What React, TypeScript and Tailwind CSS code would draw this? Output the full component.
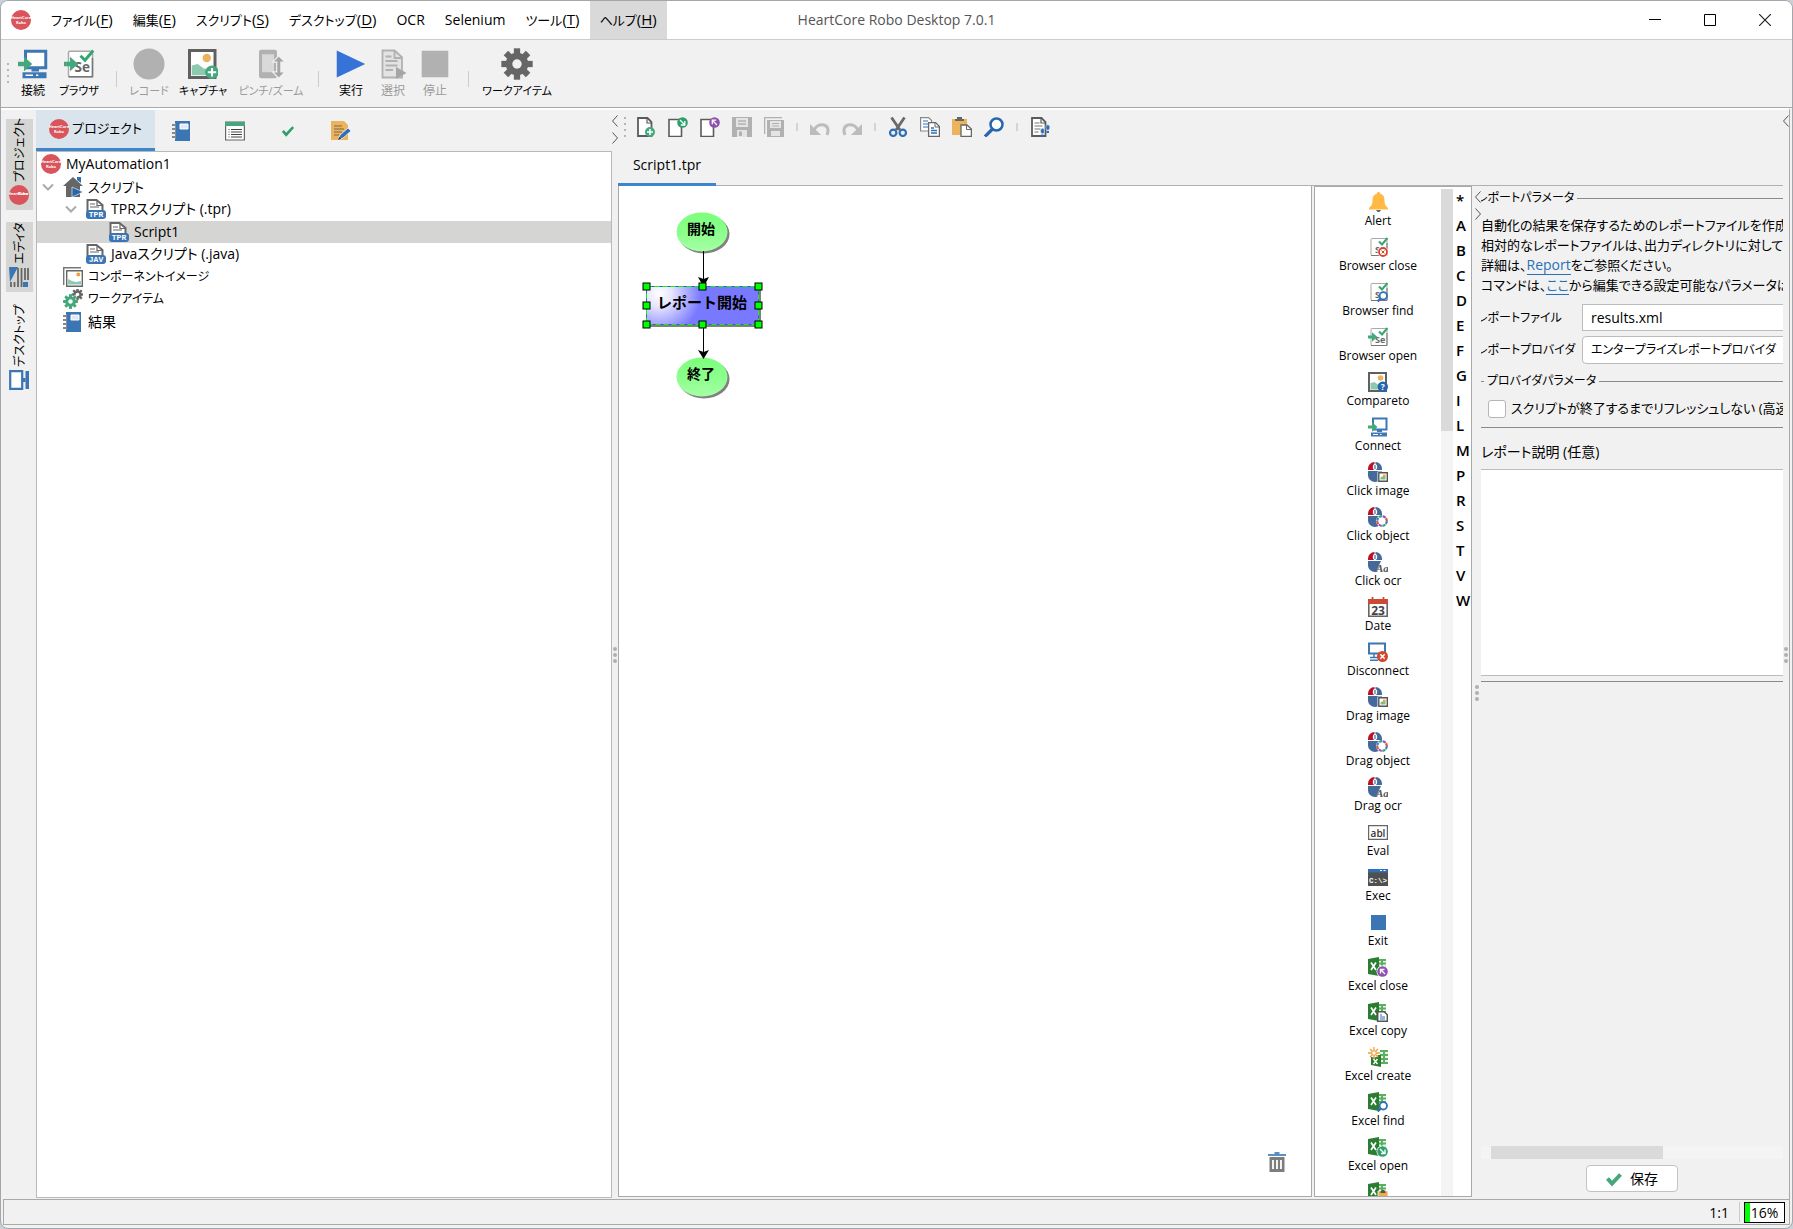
import { useState, type ReactNode } from "react";

/* ---------- shared glyphs ---------- */

function Icon({ children, className = "size-5", box = 20 }: { children: ReactNode; className?: string; box?: number }) {
  return (
    <svg viewBox={`0 0 ${box} ${box}`} className={`shrink-0 ${className}`} fill="none" aria-hidden="true">
      {children}
    </svg>
  );
}

function Logo({ className = "size-5" }: { className?: string }) {
  return (
    <Icon className={className}>
      <circle cx="10" cy="10" r="10" fill="#d9545b" />
      <text x="10" y="9" fontSize="4" fontWeight="700" textAnchor="middle" fill="#fff">HeartCore</text>
      <text x="10" y="14" fontSize="4" fontWeight="700" textAnchor="middle" fill="#fff">Robo</text>
    </Icon>
  );
}

const monitor = (
  <>
    <path d="M5 1.5h13.5v11H5z" fill="#fff" stroke="#3d78b4" strokeWidth="2" />
    <path d="M9 13h5v2H9z" fill="#3d78b4" />
    <path d="M3 15.5h16v4H3z" fill="#3d78b4" />
    <path d="M5 17h5v1H5zM12 17h1.5v1H12z" fill="#fff" />
  </>
);

const greenArrow = <path d="M0 8.5h4V5.2L9.5 10 4 14.8v-3.3H0z" fill="#45a77c" />;

const seleniumBox = (
  <>
    <rect x="3" y="1.5" width="16" height="17" rx="1" fill="#fff" stroke="#a9a9a9" />
    <path d="M3 18.5h16V6" stroke="#777" />
    <text x="7" y="15.5" fontSize="9" fontWeight="700" fill="#666">Se</text>
    <path d="M11 4.5l3 3L19.5 1" stroke="#35a66f" strokeWidth="2" />
  </>
);

const badgeX = (
  <>
    <circle cx="14.5" cy="14.5" r="5.5" fill="#d4462f" />
    <path d="M12.3 12.3l4.4 4.4M16.7 12.3l-4.4 4.4" stroke="#fff" strokeWidth="1.5" />
  </>
);

const badgeFind = (
  <>
    <circle cx="15.3" cy="13.8" r="3.7" fill="#fff" stroke="#2f6fb5" strokeWidth="1.8" />
    <path d="M12.6 16.6L9.6 19.4" stroke="#2f6fb5" strokeWidth="2.4" />
  </>
);

const notebook = (
  <>
    <path d="M3 0h15v20H3z" fill="#3b75b3" />
    <path d="M8 3h8v5H8z" fill="#dfeaf5" stroke="#fff" />
    <path d="M0 4h4M0 8h4M0 12h4M0 16h4" stroke="#f1f1f1" strokeWidth="2.6" />
    <path d="M0 4h4M0 8h4M0 12h4M0 16h4" stroke="#666" strokeWidth="1.4" />
  </>
);

const mouse = (
  <>
    <path d="M6.5 0A6.5 6.5 0 0 0 0 6.5V8h6.5z" fill="#bd1024" />
    <path d="M7.5 0A6.5 6.5 0 0 1 14 6.5V8H7.5z" fill="#44699b" />
    <path d="M0 9h14v4.5a7 6.5 0 0 1-14 0z" fill="#44699b" />
    <ellipse cx="7" cy="5" rx="2.2" ry="3" fill="#fff" />
    <path d="M7 3v4" stroke="#44699b" strokeWidth="1.2" />
  </>
);

const mouseImage = (
  <>
    {mouse}
    <path d="M9.5 9.5H20V20H9.5z" fill="#fff" />
    <path d="M10.8 10.8h8.5v8.5h-8.5z" fill="#fff" stroke="#555" strokeWidth="1.4" />
    <path d="M12.5 17.5v-2l2-1 3-1v4z" fill="#7dbb84" />
    <path d="M15 12.5h2.5v2.5H15z" fill="#f1a43a" />
  </>
);

// Two dashes of each colour make up the eight-part ring
const RING = [
  { color: "#4a7fc1", offset: 0 },
  { color: "#3aa377", offset: -3.8 },
  { color: "#8c55b5", offset: -7.6 },
  { color: "#d75b46", offset: -11.4 },
];

const mouseObject = (
  <>
    {mouse}
    <circle cx="14" cy="14" r="6" fill="#fff" />
    {RING.map(({ color, offset }) => (
      <circle key={color} cx="14" cy="14" r="4.8" stroke={color} strokeWidth="2.2" strokeDasharray="3.2 11.9" strokeDashoffset={offset} />
    ))}
  </>
);

const mouseOcr = (
  <>
    {mouse}
    <path d="M8 20l5-11h7v11z" fill="#fff" />
    <text x="8" y="19.5" fontSize="11" fontStyle="italic" fontWeight="700" fill="#555" className="font-['Liberation_Serif']">Aa</text>
  </>
);

const excel = (
  <>
    <path d="M10 2h8v15h-8z" fill="#eaf5ea" />
    <path d="M10 3h8M10 6.5h8M10 10h8M14 2v14" stroke="#5cae60" strokeWidth="2" />
    <path d="M0 2l11-2v19L0 17z" fill="#2b7d32" />
    <path d="M3 5.5l5 7.5M8 5.5L3 13" stroke="#fff" strokeWidth="1.7" />
  </>
);

const picture = (
  <>
    <path d="M1 1h17v18H1z" fill="#fff" stroke="#606060" strokeWidth="2" />
    <circle cx="12.5" cy="6" r="2.8" fill="#ecb35d" />
    <path d="M2.5 17.5V11l4-1 4 3 4 .5v4z" fill="#8ccab0" />
  </>
);

const doc = <path d="M2 1h9.5l4 4v14H2z" fill="#fff" stroke="#5b5b5b" strokeWidth="1.8" />;
const docFold = <path d="M11 1v5h5" stroke="#5b5b5b" strokeWidth="1.2" />;

function ScriptFile({ tag }: { tag: string }) {
  return (
    <Icon>
      <path d="M1.5 12V1h9l6 5v6" fill="#fff" stroke="#666" strokeWidth="2" />
      <path d="M11 1v5.5h6M4 5h5M4 8h9" stroke="#666" strokeWidth="1.2" />
      <rect x="0" y="11" width="20" height="9" rx="3" fill="#3b75b3" />
      <text x="10" y="18.4" fontSize="8" fontWeight="700" textAnchor="middle" fill="#fff" className="font-['Liberation_Mono']">{tag}</text>
    </Icon>
  );
}

// A toothed wheel built from radial bars around a ring
function Cog({ cx, cy, r, color, hole }: { cx: number; cy: number; r: number; color: string; hole: string }) {
  return (
    <>
      {[0, 45, 90, 135].map((a) => (
        <rect key={a} x={cx - r * 0.2} y={cy - r} width={r * 0.4} height={r * 2} fill={color} transform={`rotate(${a} ${cx} ${cy})`} />
      ))}
      <circle cx={cx} cy={cy} r={r * 0.72} fill={color} />
      <circle cx={cx} cy={cy} r={r * 0.3} fill={hole} />
    </>
  );
}

/* ---------- menu and main toolbar ---------- */

const MENUS: { label: string; key?: string; open?: boolean }[] = [
  { label: "ファイル", key: "F" },
  { label: "編集", key: "E" },
  { label: "スクリプト", key: "S" },
  { label: "デスクトップ", key: "D" },
  { label: "OCR" },
  { label: "Selenium" },
  { label: "ツール", key: "T" },
  { label: "ヘルプ", key: "H", open: true },
];

function TitleBar() {
  return (
    <header className="relative flex h-[39px] shrink-0 items-center border-b border-[#cccccc] bg-white">
      <div className="flex w-[40px] justify-center">
        <Logo />
      </div>
      <nav className="flex h-full">
        {MENUS.map(({ label, key, open }) => (
          <button
            key={label}
            type="button"
            className={`px-[10px] pb-[2px] whitespace-nowrap ${key ? "text-[13px]" : "text-[14px]"} ${open ? "bg-[#d9d9d9]" : ""}`}
          >
            {label}
            {key && (
              <span className="text-[15px]">
                (<u className="underline-offset-2">{key}</u>)
              </span>
            )}
          </button>
        ))}
      </nav>
      <h1 className="pointer-events-none absolute inset-x-0 pb-[2px] text-center text-[14px] text-[#555]">HeartCore Robo Desktop 7.0.1</h1>
      <div className="ml-auto flex h-full">
        <button type="button" aria-label="Minimize" className="flex w-[55px] items-center justify-center">
          <Icon className="size-3" box={12}><path d="M0 5.5h12" stroke="#000" /></Icon>
        </button>
        <button type="button" aria-label="Maximize" className="flex w-[55px] items-center justify-center">
          <Icon className="size-3" box={12}><path d="M.5.5h11v11H.5z" stroke="#000" /></Icon>
        </button>
        <button type="button" aria-label="Close" className="flex w-[55px] items-center justify-center">
          <Icon className="size-3" box={12}><path d="M0 0l12 12M12 0L0 12" stroke="#222" strokeWidth="1.2" /></Icon>
        </button>
      </div>
    </header>
  );
}

interface ToolButtonProps {
  label: string;
  width: string;
  kana?: boolean;
  disabled?: boolean;
  children: ReactNode;
}

function ToolButton({ label, width, kana, disabled, children }: ToolButtonProps) {
  return (
    <button type="button" disabled={disabled} className={`flex shrink-0 flex-col items-center gap-[3px] ${width} ${disabled ? "text-[#9b9b9b]" : "text-black"}`}>
      <span className="flex h-8 items-center">{children}</span>
      <span className={`leading-[16px] whitespace-nowrap ${kana ? "text-[11px]" : "text-[12px]"}`}>{label}</span>
    </button>
  );
}

const ToolSep = () => <span className="mt-3 h-4 w-6 shrink-0 bg-[linear-gradient(#ccc,#ccc)] bg-[length:1px_100%] bg-center bg-no-repeat" />;

function MainToolbar() {
  return (
    <div className="flex h-[68px] shrink-0 items-center border-b border-[#a9a9a9] bg-[#f1f1f1] pb-px pl-[3px]">
      <Grip />
      <ToolButton label="接続" width="w-[42px]">
        <Icon className="size-[30px]">{monitor}{greenArrow}</Icon>
      </ToolButton>
      <ToolButton label="ブラウザ" width="w-[50px]" kana>
        <Icon className="size-[30px]">{seleniumBox}{greenArrow}</Icon>
      </ToolButton>
      <ToolSep />
      <ToolButton label="レコード" width="w-[42px]" kana disabled>
        <Icon className="size-8"><circle cx="10" cy="10" r="9.7" fill="#b1b1b1" /></Icon>
      </ToolButton>
      <ToolButton label="キャプチャ" width="w-[66px]" kana>
        <Icon className="size-[30px]">
          {picture}
          <circle cx="16" cy="15.5" r="4.5" fill="#45a77c" />
          <path d="M16 12.7v5.6M13.2 15.5h5.6" stroke="#fff" strokeWidth="1.4" />
        </Icon>
      </ToolButton>
      <ToolButton label="ピンチ/ズーム" width="w-[70px]" kana disabled>
        <Icon className="size-[30px]">
          <rect x="2" y=".5" width="12" height="19" rx="1.5" fill="#b1b1b1" />
          <path d="M4 3.5h8v12H4z" fill="#d8d8d8" />
          <path d="M15.2 4.5l4.2 4.2h-2.8v6.6h2.8l-4.2 4.2-4.2-4.2h2.8V8.7H11z" fill="#a5a5a5" stroke="#f1f1f1" strokeWidth=".8" />
        </Icon>
      </ToolButton>
      <ToolSep />
      <ToolButton label="実行" width="w-[42px]">
        <Icon className="size-[30px]"><path d="M.5 1l19 9-19 9z" fill="#3672d8" /></Icon>
      </ToolButton>
      <ToolButton label="選択" width="w-[42px]" disabled>
        <Icon className="size-[30px]">
          <path d="M3 1h8l5 4.5V19H3z" fill="#e3e3e3" stroke="#b1b1b1" strokeWidth="1.2" />
          <path d="M11 1v5h5M5 5h4M5 8h8M5 11h8M5 14h5" stroke="#b1b1b1" strokeWidth="1.2" />
          <path d="M12 12l7 4-7 4z" fill="#a5a5a5" />
        </Icon>
      </ToolButton>
      <ToolButton label="停止" width="w-[42px]" disabled>
        <Icon className="size-[28px]"><path d="M.5.5h19v19H.5z" fill="#b1b1b1" /></Icon>
      </ToolButton>
      <ToolSep />
      <ToolButton label="ワークアイテム" width="w-[74px]" kana>
        <Icon className="size-8"><Cog cx={10} cy={10} r={9.8} color="#666" hole="#f1f1f1" /></Icon>
      </ToolButton>
    </div>
  );
}

function Grip() {
  return (
    <span className="flex w-[8px] shrink-0 flex-col items-center gap-1">
      {[0, 1, 2, 3].map((i) => (
        <span key={i} className="size-[2px] bg-[#b5b5b5]" />
      ))}
    </span>
  );
}

/* ---------- left side ---------- */

const desktopGlyph = (
  <>
    <path d="M1.2 1.2h17.6v12H1.2z" fill="#fff" stroke="#3b75b3" strokeWidth="2.2" />
    <path d="M8 13.5h4v3H8z" fill="#3b75b3" />
    <path d="M1 16.5h18V20H1z" fill="#3b75b3" />
  </>
);

const editorGlyph = (
  <>
    <path d="M0 2h5M0 5.5h5M0 9h19M0 12.5h19M7 16h12M7 19h12" stroke="#666" strokeWidth="1.8" />
    <path d="M0 14h5v5H0z" fill="#3b75b3" />
    <path d="M5 1L20 0v9z" fill="#3b75b3" />
  </>
);

function SideRail() {
  const tab =
    "flex w-[27px] rotate-180 items-center justify-start gap-[3px] pt-[5px] text-[12px] leading-[27px] whitespace-nowrap [writing-mode:vertical-rl] [text-orientation:sideways]";
  return (
    <aside className="flex w-[35px] shrink-0 flex-col items-start gap-3 pt-[9px] pl-[5px]">
      <button type="button" className={`${tab} h-[91px] bg-[#d5d5d3]`}>
        <Logo className="size-5 rotate-90" />
        プロジェクト
      </button>
      <button type="button" className={`${tab} h-[70px] bg-[#d5d5d3]`}>
        <Icon className="size-5 rotate-90">{editorGlyph}</Icon>
        エディタ
      </button>
      <button type="button" className={`${tab} h-[91px]`}>
        <Icon className="size-5 rotate-90">{desktopGlyph}</Icon>
        デスクトップ
      </button>
    </aside>
  );
}

const TREE: { label: string; pad: string; size?: string; arrow?: boolean; selected?: boolean; icon: ReactNode }[] = [
  { label: "MyAutomation1", pad: "pl-[4px]", icon: <Logo /> },
  {
    label: "スクリプト", pad: "pl-[5px]", size: "text-[13px]", arrow: true,
    icon: (
      <Icon>
        <path d="M10 0l10 9h-3v11H3V9H0z" fill="#666" />
        <path d="M14 0h4v6l-4-3z" fill="#2f6fb5" />
        <path d="M9 10l11 5-11 5z" fill="#2566ae" stroke="#fff" strokeWidth=".6" />
      </Icon>
    ),
  },
  { label: "TPRスクリプト (.tpr)", pad: "pl-[28px]", arrow: true, icon: <ScriptFile tag="TPR" /> },
  { label: "Script1", pad: "pl-[72px]", selected: true, icon: <ScriptFile tag="TPR" /> },
  { label: "Javaスクリプト (.java)", pad: "pl-[49px]", icon: <ScriptFile tag="JAV" /> },
  {
    label: "コンポーネントイメージ", pad: "pl-[26px]", size: "text-[12px]",
    icon: (
      <Icon>
        <path d="M.7 18V.7H18" stroke="#777" strokeWidth="1.4" />
        <path d="M3.7 3.7h15.6v15.6H3.7z" fill="#fff" stroke="#666" strokeWidth="1.4" />
        <circle cx="15.3" cy="7.5" r="2" fill="#eda33d" />
        <path d="M5 17.5V12l4 2 4 1 5-1v3.5z" fill="#8ccab0" />
      </Icon>
    ),
  },
  {
    label: "ワークアイテム", pad: "pl-[26px]", size: "text-[12px]",
    icon: (
      <Icon>
        <Cog cx={14.5} cy={5.5} r={6} color="#666" hole="#fff" />
        <Cog cx={7.5} cy={12.5} r={8} color="#fff" hole="#fff" />
        <Cog cx={7.5} cy={12.5} r={7.4} color="#45a77c" hole="#fff" />
      </Icon>
    ),
  },
  { label: "結果", pad: "pl-[26px]", icon: <Icon>{notebook}</Icon> },
];

function ProjectPanel() {
  return (
    <section className="flex w-[576px] shrink-0 flex-col">
      <div className="flex h-[41px] shrink-0">
        <button type="button" className="flex w-[119px] items-center justify-center gap-[3px] border-b-[3px] border-[#3d85cc] bg-[#dae4ed] text-[13px] whitespace-nowrap">
          <Logo />
          プロジェクト
        </button>
        <button type="button" aria-label="結果" className="flex w-[53px] items-center justify-center"><Icon>{notebook}</Icon></button>
        <button type="button" aria-label="一覧" className="flex w-[53px] items-center justify-center">
          <Icon>
            <path d="M.6 1h18.8v18H.6z" fill="#fff" stroke="#666" strokeWidth="1.2" />
            <path d="M0 1h20v4H0z" fill="#45a77c" />
            <path d="M3.5 8.5h1M6 8.5h11M3.5 11h1M6 11h11M3.5 13.5h1M6 13.5h11M3.5 16h1M6 16h11" stroke="#444" />
          </Icon>
        </button>
        <button type="button" aria-label="確認" className="flex w-[53px] items-center justify-center">
          <Icon className="size-3" box={12}><path d="M.8 6l3.4 3.7L11.2 2" stroke="#2f9e6c" strokeWidth="2.6" /></Icon>
        </button>
        <button type="button" aria-label="編集" className="flex w-[53px] items-center justify-center">
          <Icon>
            <path d="M0 0h13l4 4v15H0z" fill="#ecb35d" />
            <path d="M3 5h8M3 8h10M3 11h8M3 14h5" stroke="#7b6a4c" strokeWidth="1.2" />
            <path d="M7 19l2-5 8-7 3 3-8 7z" fill="#2f6fb5" stroke="#fff" strokeWidth=".7" />
            <path d="M7 19l1.2-3 2 1.8z" fill="#333" />
          </Icon>
        </button>
      </div>
      <div className="mb-px flex-1 border border-[#b9b9b9] bg-white pt-px">
        <ul className="grid h-[180px] auto-rows-fr">
          {TREE.map(({ label, pad, size = "text-[14px]", arrow, selected, icon }) => (
            <li key={label} className={`flex items-center gap-[5px] leading-[20px] whitespace-nowrap ${size} ${pad} ${selected ? "bg-[#d5d5d3]" : ""}`}>
              {arrow && (
                <Icon className="mr-1 size-3" box={12}><path d="M1 3.5l5 5 5-5" stroke="#aaa" strokeWidth="2" /></Icon>
              )}
              {icon}
              {label}
            </li>
          ))}
        </ul>
      </div>
    </section>
  );
}

// Vertical divider with collapse arrows at its head and three dots half way
function Splitter({ width, arrows = 2 }: { width: string; arrows?: number }) {
  return (
    <div className={`relative flex shrink-0 flex-col items-center justify-center ${width}`}>
      <span className="absolute top-[5px] right-0 flex flex-col gap-[5px]">
        <svg viewBox="0 0 6 12" className="h-3 w-[6px]" fill="none"><path d="M5.5.5L.5 6l5 5.5" stroke="#555" /></svg>
        {arrows === 2 && <svg viewBox="0 0 6 12" className="h-3 w-[6px]" fill="none"><path d="M.5.5l5 5.5-5 5.5" stroke="#555" /></svg>}
      </span>
      <span className="flex flex-col gap-[2px]">
        <span className="size-1 rounded-full bg-[#b0b0b0]" />
        <span className="size-1 rounded-full bg-[#b0b0b0]" />
        <span className="size-1 rounded-full bg-[#b0b0b0]" />
      </span>
    </div>
  );
}

/* ---------- editor ---------- */

const blankPage = <path d="M1 2.5h12.5v17H1z" fill="#fff" stroke="#5b5b5b" strokeWidth="1.6" />;

const EDITOR_TOOLS: { name: string; disabled?: boolean; icon: ReactNode }[][] = [
  [
    {
      name: "New",
      icon: (
        <>
          {doc}{docFold}
          <circle cx="14" cy="15" r="5" fill="#45a77c" />
          <path d="M14 12v6M11 15h6" stroke="#fff" strokeWidth="1.6" />
        </>
      ),
    },
    {
      name: "Open",
      icon: (
        <>
          {blankPage}
          <circle cx="14.5" cy="5.5" r="5.3" fill="#2f9e6c" />
          <path d="M12 3l4.5 4.5M16.8 4v4h-4" stroke="#fff" strokeWidth="1.3" />
        </>
      ),
    },
    {
      name: "Close",
      icon: (
        <>
          {blankPage}
          <circle cx="14.5" cy="5.5" r="5.3" fill="#8e4fae" />
          <path d="M17 8l-4.5-4.5M12.3 7.2v-4h4" stroke="#fff" strokeWidth="1.3" />
        </>
      ),
    },
    {
      name: "Save", disabled: true,
      icon: (
        <>
          <path d="M0 0h20v20H0z" fill="#b1b1b1" />
          <path d="M4 1h12v9H4zM5 13h10v7H5z" fill="#e4e4e4" />
          <path d="M6 4h8M6 7h8" stroke="#b1b1b1" strokeWidth="1.4" />
          <path d="M7 14.5h3V19H7z" fill="#b1b1b1" />
        </>
      ),
    },
    {
      name: "Save all", disabled: true,
      icon: (
        <>
          <path d="M.6 17V.6H18" stroke="#b1b1b1" strokeWidth="1.4" />
          <path d="M3 3h17v17H3z" fill="#b1b1b1" />
          <path d="M6 4h11v7H6zM7 14h9v5H7z" fill="#e4e4e4" />
          <path d="M8 6.5h7M8 9h7" stroke="#b1b1b1" strokeWidth="1.2" />
        </>
      ),
    },
  ],
  [
    {
      name: "Undo", disabled: true,
      icon: (
        <>
          <path d="M0 7v11h11z" fill="#bcbcbc" />
          <path d="M4 13c2-4 6-6 10-5s5 5 3 10" stroke="#bcbcbc" strokeWidth="3" />
        </>
      ),
    },
    {
      name: "Redo", disabled: true,
      icon: (
        <>
          <path d="M20 7v11H9z" fill="#bcbcbc" />
          <path d="M16 13c-2-4-6-6-10-5s-5 5-3 10" stroke="#bcbcbc" strokeWidth="3" />
        </>
      ),
    },
  ],
  [
    {
      name: "Cut",
      icon: (
        <>
          <path d="M3.5.5L12 13M16.5.5L8 13" stroke="#6a6a6a" strokeWidth="2.8" />
          <circle cx="5.2" cy="15.8" r="3.2" fill="#f1f1f1" stroke="#2f6fb5" strokeWidth="2.2" />
          <circle cx="14.8" cy="15.8" r="3.2" fill="#f1f1f1" stroke="#2f6fb5" strokeWidth="2.2" />
        </>
      ),
    },
    {
      name: "Copy",
      icon: (
        <>
          <path d="M.6.6h8l3 3V14H.6z" fill="#fff" stroke="#888" strokeWidth="1.2" />
          <path d="M3 4h5M3 7h5M3 10h5" stroke="#2f6fb5" strokeWidth="1.2" />
          <path d="M8.6 5.6h7l3.8 4v9.8H8.6z" fill="#fff" stroke="#666" strokeWidth="1.3" />
          <path d="M15 5.6V10h4.4" stroke="#666" />
          <path d="M11 11h3M11 13.5h6M11 16h6" stroke="#2f6fb5" strokeWidth="1.3" />
        </>
      ),
    },
    {
      name: "Paste",
      icon: (
        <>
          <path d="M0 2h15v16H0z" fill="#ecb35d" />
          <path d="M5 0h5v2h2v2H3V2h2z" fill="#666" />
          <path d="M9 8h6l4.4 4v7.4H9z" fill="#fff" stroke="#666" strokeWidth="1.3" />
          <path d="M14.5 8v4.5h5" stroke="#666" />
        </>
      ),
    },
    {
      name: "Find",
      icon: (
        <>
          <circle cx="12.5" cy="7.5" r="6" fill="#fff" stroke="#2566ae" strokeWidth="2.5" />
          <path d="M8.5 12L1 19.5" stroke="#2566ae" strokeWidth="3.2" />
        </>
      ),
    },
  ],
  [
    {
      name: "Validate",
      icon: (
        <>
          {doc}{docFold}
          <path d="M4.5 6h5M4.5 9h8M4.5 12h6M4.5 15h4" stroke="#777" strokeWidth="1.2" />
          <ellipse cx="12.5" cy="14" rx="2" ry="2.8" fill="#2f6fb5" stroke="#f1f1f1" strokeWidth=".5" />
          <ellipse cx="17.8" cy="10.5" rx="2" ry="2.8" fill="#2f6fb5" stroke="#f1f1f1" strokeWidth=".5" />
          <path d="M11 18.3h2.5M16.5 15h2.5" stroke="#2f6fb5" strokeWidth="1.8" />
        </>
      ),
    },
  ],
];

function Handle({ x, y }: { x: number; y: number }) {
  return <rect x={x - 3.5} y={y - 3.5} width="7" height="7" fill="#00ff00" stroke="#000" />;
}

function FlowNode({ y, label }: { y: number; label: string }) {
  return (
    <>
      <ellipse cx="85" cy={y + 2} rx="25.5" ry="19.5" fill="#808080" />
      <ellipse cx="83" cy={y} rx="25.5" ry="19.5" fill="url(#leaf)" />
      <text x="82" y={y + 2} textAnchor="middle" fontSize="14" fontWeight="700">{label}</text>
    </>
  );
}

function FlowChart() {
  return (
    <svg width="160" height="230" viewBox="0 0 160 230" className="absolute top-0 left-0 font-['Noto_Sans_CJK_JP'] [font-feature-settings:normal]">
      <defs>
        <linearGradient id="leaf" x1="0" y1="0" x2="0" y2="1">
          <stop offset="0" stopColor="#7bff7b" />
          <stop offset="0.6" stopColor="#8fff8f" />
          <stop offset="1" stopColor="#a6ffa6" />
        </linearGradient>
        <radialGradient id="shine" gradientUnits="userSpaceOnUse" cx="40" cy="108" r="42">
          <stop offset="0" stopColor="#fff" />
          <stop offset="0.3" stopColor="#e6e6ff" />
          <stop offset="1" stopColor="#7979ff" />
        </radialGradient>
      </defs>
      <FlowNode y={46} label="開始" />
      <FlowNode y={191} label="終了" />
      <path d="M84.5 65v30M84.5 141v28" stroke="#000" />
      <path d="M79 91l5.5 2 5.5-2-5.5 10zM79 164l5.5 2 5.5-2-5.5 9z" fill="#000" />
      <path d="M30 103h112v38H30z" fill="#808080" />
      <path d="M27 100h113v38H27z" fill="url(#shine)" />
      <path d="M27.5 100.5h112v38h-112z" stroke="#4a4ad8" fill="none" />
      <path d="M27.5 100.5h112v38h-112z" stroke="#00ff00" strokeDasharray="5 3" fill="none" />
      <text x="83" y="122" textAnchor="middle" fontSize="15" fontWeight="700">レポート開始</text>
      {[100.5, 119.5, 138.5].map((y) => (
        <g key={y}>
          <Handle x={27.5} y={y} />
          {y !== 119.5 && <Handle x={83.5} y={y} />}
          <Handle x={139.5} y={y} />
        </g>
      ))}
    </svg>
  );
}

const excelBadge = (color: string, d: string) => (
  <>
    {excel}
    <circle cx="14.5" cy="14.5" r="6" fill="#fff" />
    <circle cx="14.5" cy="14.5" r="5.3" fill={color} />
    <path d={d} stroke="#fff" strokeWidth="1.4" />
  </>
);

const COMMANDS: { label: string; icon: ReactNode }[] = [
  {
    label: "Alert",
    icon: (
      <>
        <path d="M10.5 0c1 0 1.5.7 1.5 1.5 3 .8 4.500 3.300 4.500 6.500 0 5 1.500 6 3.500 8v1.500H1V16c2-2 3.500-3 3.500-8C4.500 4.800 6 2.300 9 1.500 9 .7 9.500 0 10.500 0z" fill="#ffb944" />
        <path d="M8 18h5l-1.5 2h-2z" fill="#666" />
      </>
    ),
  },
  {
    label: "Browser close",
    icon: (
      <>
        {seleniumBox}
        <circle cx="15" cy="15" r="5.4" fill="#fff" />
        <circle cx="15" cy="15" r="4" stroke="#d4462f" strokeWidth="1.8" />
        <path d="M13.5 13.5l3 3M16.5 13.5l-3 3" stroke="#d4462f" />
      </>
    ),
  },
  { label: "Browser find", icon: <>{seleniumBox}{badgeFind}</> },
  { label: "Browser open", icon: <>{seleniumBox}{greenArrow}</> },
  {
    label: "Compareto",
    icon: (
      <>
        {picture}
        <circle cx="14.8" cy="14.8" r="5.2" fill="#2566ae" />
        <text x="14.8" y="18" fontSize="8.5" fontWeight="700" textAnchor="middle" fill="#fff">?</text>
      </>
    ),
  },
  { label: "Connect", icon: <>{monitor}{greenArrow}</> },
  { label: "Click image", icon: mouseImage },
  { label: "Click object", icon: mouseObject },
  { label: "Click ocr", icon: mouseOcr },
  {
    label: "Date",
    icon: (
      <>
        <path d="M.8 3h18.4v16.2H.8z" fill="#fff" stroke="#666" strokeWidth="1.6" />
        <path d="M0 2h20v5H0z" fill="#cc4a33" />
        <path d="M4.5 0v4M15.5 0v4" stroke="#cc4a33" strokeWidth="1.8" />
        <text x="10" y="17.5" fontSize="12" fontWeight="700" textAnchor="middle" fill="#444">23</text>
      </>
    ),
  },
  {
    label: "Disconnect",
    icon: (
      <>
        <path d="M1 1.5h16v10H1z" fill="#fff" stroke="#3d78b4" strokeWidth="2" />
        <path d="M6 12v3.5M2 15.5h8M2 18.3h8" stroke="#3d78b4" strokeWidth="1.5" />
        {badgeX}
      </>
    ),
  },
  { label: "Drag image", icon: mouseImage },
  { label: "Drag object", icon: mouseObject },
  { label: "Drag ocr", icon: mouseOcr },
  {
    label: "Eval",
    icon: (
      <>
        <path d="M.6 3.6h18.8v13.8H.6z" fill="#fff" stroke="#666" strokeWidth="1.2" />
        <text x="10" y="14.5" fontSize="10" fontWeight="600" textAnchor="middle" fill="#333">abl</text>
      </>
    ),
  },
  {
    label: "Exec",
    icon: (
      <>
        <path d="M0 2h20v17H0z" fill="#505050" />
        <path d="M0 2h20v3.5H0z" fill="#2f6fb5" />
        <path d="M12 3.5h2M15.5 3.5h2" stroke="#fff" />
        <text x="10" y="16" fontSize="7.5" fontWeight="700" textAnchor="middle" fill="#fff" className="font-['Liberation_Mono']">C:\&gt;</text>
      </>
    ),
  },
  { label: "Exit", icon: <path d="M3 3h15v15H3z" fill="#3b75b3" /> },
  { label: "Excel close", icon: excelBadge("#8e4fae", "M17 17l-4-4M12.5 16.5v-4h4") },
  {
    label: "Excel copy",
    icon: (
      <>
        {excel}
        <path d="M9.7 9.7h6.5l3.1 3.1v6.5H9.7z" fill="#fff" stroke="#555" strokeWidth="1.5" />
        <path d="M12 13h2M12 15h5M12 17h5" stroke="#2f6fb5" />
      </>
    ),
  },
  {
    label: "Excel create",
    icon: (
      <>
        <path d="M12 3h8v14h-8z" fill="#eaf5ea" />
        <path d="M12 4h8M12 8h8M12 12h8M12 16h8M16 3v14" stroke="#5cae60" strokeWidth="2" />
        <path d="M3 8h10v12L3 18z" fill="#2b7d32" />
        <path d="M5.5 12l4 5M9.5 12l-4 5" stroke="#fff" strokeWidth="1.4" />
        <circle cx="6" cy="6" r="4.5" fill="#fff" />
        <path d="M6 0v12M0 6h12M2 2l8 8M10 2l-8 8" stroke="#eda33d" strokeWidth="1.3" />
        <circle cx="6" cy="6" r="2.2" fill="#fff" stroke="#eda33d" />
      </>
    ),
  },
  { label: "Excel find", icon: <>{excel}{badgeFind}</> },
  { label: "Excel open", icon: excelBadge("#2f9e6c", "M12 12l4.5 4.5M17 12.5v4h-4") },
  {
    label: "",
    icon: (
      <>
        {excel}
        <path d="M10 9h10v11H10z" fill="#ecae47" stroke="#fff" strokeWidth=".8" />
        <path d="M12.5 11V9.500L14 8h2l1.5 1.5V11z" fill="#555" />
      </>
    ),
  },
];

const LETTERS = ["*", "A", "B", "C", "D", "E", "F", "G", "I", "L", "M", "P", "R", "S", "T", "V", "W"];

function CommandPalette() {
  return (
    <div className="mb-[2px] ml-[2px] flex w-[158px] shrink-0 overflow-hidden border border-[#a9a9a9] bg-white">
      <ul className="min-h-0 w-[126px] shrink-0 pt-[5px]">
        {COMMANDS.map(({ label, icon }, i) => (
          <li key={i} className="flex h-[45px] flex-col items-center text-[12px] leading-[18px] whitespace-nowrap">
            <Icon>{icon}</Icon>
            {label}
          </li>
        ))}
      </ul>
      <div className="mt-[2px] w-3 shrink-0 bg-[#f4f4f4]">
        <div className="h-[24%] bg-[#dadada]" />
      </div>
      <ul className="pt-px pl-[3px] text-[15px] leading-[25px] font-semibold">
        {LETTERS.map((l) => (
          <li key={l}>{l}</li>
        ))}
      </ul>
    </div>
  );
}

/* ---------- report parameters ---------- */

function ReportPanel() {
  const [file, setFile] = useState("results.xml");
  const [noRefresh, setNoRefresh] = useState(false);
  const [note, setNote] = useState("");

  return (
    <section className="flex w-[302px] shrink-0 flex-col overflow-hidden text-[13px] whitespace-nowrap">
      <div className="-ml-1 flex h-[24px] shrink-0 items-center gap-[3px]">
        <h2 className="text-[12px]">レポートパラメータ</h2>
        <span className="h-px flex-1 bg-[#8a8a8a]" />
      </div>
      <p className="pt-[5px] leading-[20px]">
        自動化の結果を保存するためのレポートファイルを作成します。
        <br />
        相対的なレポートファイルは、出力ディレクトリに対して
        <br />
        詳細は、<a href="#report" className="border-b border-[#2a70b8] text-[14px] text-[#2a70b8]">Report</a>をご参照ください。
        <br />
        コマンドは、<a href="#edit" className="border-b border-[#2a70b8] text-[#2a70b8]">ここ</a>から編集できる設定可能なパラメータは
      </p>
      <div className="mt-[9px] flex h-[27px] shrink-0 items-center">
        <label htmlFor="report-file" className="-ml-1 w-[105px] shrink-0 text-[12px]">レポートファイル</label>
        <input
          id="report-file"
          value={file}
          onChange={(e) => setFile(e.target.value)}
          className="h-full w-[260px] shrink-0 border border-[#bcbcbc] bg-white px-2 text-[14px]"
        />
      </div>
      <div className="mt-[5px] flex h-[28px] shrink-0 items-center">
        <label htmlFor="report-provider" className="-ml-1 w-[105px] shrink-0 text-[12px]">レポートプロバイダ</label>
        <select id="report-provider" className="h-full w-[260px] shrink-0 appearance-none rounded border border-[#bcbcbc] bg-white px-2 text-[12px]">
          <option>エンタープライズレポートプロバイダ</option>
        </select>
      </div>
      <fieldset className="mt-[7px] shrink-0 border-b border-[#8a8a8a]">
        <legend className="flex h-[20px] w-full items-center gap-[3px] text-[12px]">
          <span className="h-px w-[3px] bg-[#8a8a8a]" />
          プロバイダパラメータ
          <span className="h-px flex-1 bg-[#8a8a8a]" />
        </legend>
        <label className="flex h-[36px] items-center gap-[5px] pl-[7px]">
          <input
            type="checkbox"
            checked={noRefresh}
            onChange={(e) => setNoRefresh(e.target.checked)}
            className="size-[18px] shrink-0 appearance-none rounded-[3px] border border-[#b5b5b5] bg-white checked:bg-[#3d85cc]"
          />
          スクリプトが終了するまでリフレッシュしない (高速)
        </label>
      </fieldset>
      <label htmlFor="report-note" className="flex h-[41px] shrink-0 items-center pt-[5px] text-[14px]">レポート説明 (任意)</label>
      <textarea
        id="report-note"
        value={note}
        onChange={(e) => setNote(e.target.value)}
        className="h-[207px] w-full shrink-0 resize-none border-y border-[#bcbcbc] bg-white"
      />
      <hr className="mt-[5px] border-[#8a8a8a]" />
      <div className="mt-auto h-[13px] shrink-0 bg-[#f4f4f4] pl-[10px]">
        <div className="h-full w-[172px] bg-[#dadada]" />
      </div>
      <button type="button" className="mt-[6px] mb-[7px] flex h-[27px] w-[92px] shrink-0 items-center justify-center gap-2 self-center rounded border border-[#c2c2c2] bg-white text-[14px]">
        <Icon className="size-4" box={16}><path d="M1.5 7.5l4.5 5 8.5-9" stroke="#45a77c" strokeWidth="4" /></Icon>
        保存
      </button>
    </section>
  );
}

function Editor() {
  return (
    <main className="flex min-w-0 flex-1 flex-col">
      <div className="flex h-[34px] shrink-0 items-center pl-[3px]">
        <Grip />
        <div className="flex pl-px">
          {EDITOR_TOOLS.map((group, i) => (
            <div key={i} className="flex items-center">
              {i > 0 && <span className="mx-[6px] h-2 w-[2px] bg-[#d4d4d4]" />}
              {group.map(({ name, disabled, icon }) => (
                <button key={name} type="button" aria-label={name} disabled={disabled} className="flex w-8 justify-center">
                  <Icon>{icon}</Icon>
                </button>
              ))}
            </div>
          ))}
        </div>
      </div>
      <div className="mr-[6px] flex h-[42px] shrink-0 border-b border-[#b0b0b0]">
        <button type="button" className="h-[42px] w-[98px] border-b-[3px] border-[#3d85cc] pt-px text-[14px]">Script1.tpr</button>
      </div>
      <div className="flex min-h-0 flex-1">
        <div className="relative mb-[2px] min-w-0 flex-1 border border-t-0 border-[#a9a9a9] bg-white">
          <FlowChart />
          <button type="button" aria-label="Delete" className="absolute right-6 bottom-6">
            <Icon>
              <path d="M7.5 0h5v2h-5zM1 2h18v2H1z" fill="#5b8fc4" />
              <path d="M2.5 5h15v15h-15z" fill="#7d7d7d" />
              <path d="M6 8v9M10 8v9M14 8v9" stroke="#fff" strokeWidth="1.8" />
            </Icon>
          </button>
        </div>
        <CommandPalette />
        <Splitter width="w-[9px]" />
        <ReportPanel />
        <div className="w-[6px] shrink-0" />
      </div>
    </main>
  );
}

export default function App() {
  return (
    <div className="h-screen overflow-hidden bg-[#c9d0d8]">
      <div className="flex h-full flex-col overflow-hidden rounded-lg border border-[#a3a6ab] bg-[#f1f1f1] font-['Open_Sans','Noto_Sans_CJK_JP',sans-serif] text-black [font-feature-settings:'palt','kern']">
        <TitleBar />
        <MainToolbar />
        <div className="mr-[2px] flex min-h-0 flex-1 border-t-2 border-r border-t-white border-r-[#a9a9a9]">
          <SideRail />
          <ProjectPanel />
          <Splitter width="w-[6px]" />
          <div className="relative flex min-w-0 flex-1">
            <Editor />
            <div className="absolute inset-y-0 right-0 flex">
              <Splitter width="w-[6px]" arrows={1} />
            </div>
          </div>
        </div>
        <footer className="mx-[2px] mb-[3px] flex h-[26px] shrink-0 items-center justify-end border border-[#a9a9a9] text-[14px]">
          <span className="pr-[10px]">1:1</span>
          <span className="h-5 w-px bg-[#ccc]" />
          <span className="mx-1 flex h-[21px] w-[41px] items-center justify-center border border-black bg-[linear-gradient(90deg,#00ff00_5px,#ffffff_5px)] leading-[19px]">16%</span>
        </footer>
      </div>
    </div>
  );
}
